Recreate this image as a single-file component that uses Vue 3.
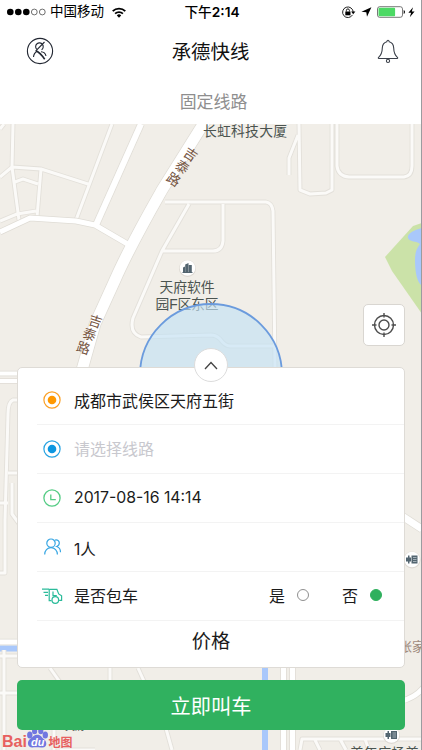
<template>
  <div class="page">
    <header class="status">
      <div class="status-left">
        <svg width="39" height="10" viewBox="0 0 39 10">
          <circle v-for="n in 5" :key="n" :cx="n * 8 - 4.7" cy="5" :r="n < 4 ? 3.3 : 2.9" :fill="n < 4 ? '#000' : 'none'" :stroke="n < 4 ? 'none' : '#333'" stroke-width=".7" />
        </svg>
        <span class="carrier">中国移动</span>
        <svg class="wifi" width="14" height="11" viewBox="0 0 14 11" fill="none" stroke="#000" stroke-width="1.8">
          <path d="M.7 4.1a9 9 0 0 1 12.6 0M3.1 6.7a5.6 5.6 0 0 1 7.8 0" />
          <path d="M4.8 8.4a3.2 3.2 0 0 1 4.4 0L7 10.7z" fill="#000" stroke="none" />
        </svg>
      </div>
      <div class="status-time">下午<b>2:14</b></div>
      <div class="status-right">
        <svg width="80" height="14" viewBox="0 0 80 14">
          <path d="M12.5 9.9a5.3 5.3 0 1 1 .7-2.5" fill="none" stroke="#222" stroke-width="1" />
          <path d="M11.1 6.6h4.3l-2.2 2.7z" />
          <path d="M5.3 6.5h5.2v3.8H5.3z" />
          <path d="M6.4 6.5V5.4a1.5 1.5 0 0 1 3 0v1.1" fill="none" stroke="#000" stroke-width=".9" />
          <path d="M31.4 2.3l-4.4 9.4-.7-4.5-4.9-.5z" />
          <rect x="37.5" y="1.7" width="25" height="10.6" rx="2.2" fill="#fff" stroke="#555" stroke-width=".8" />
          <rect x="38.5" y="2.7" width="16.6" height="8.6" rx="1" fill="#4cd964" />
          <path d="M63.7 5a2.2 2.2 0 0 1 0 4z" />
          <path d="M73 2.2l-4.6 5.6h2.7l-1.3 4.4 4.8-5.8h-2.8z" />
        </svg>
      </div>
    </header>

    <nav class="nav">
      <svg width="28" height="28" viewBox="0 0 28 28" fill="none" stroke="#222732" stroke-width="1.1">
        <circle cx="14" cy="14" r="12.6" />
        <path d="M18.5 5L9.6 14.2M10.6 12.2a3.8 3.8 0 1 1 5 .6M7.5 20c.2-3 1.3-4.5 3.6-5.8M15 14.7c2.7.2 4.5 1.9 5 4.3" />
        <path d="M10 13.8c3 1.3 5.8 4.3 8.7 8.5" stroke-width="1.6" />
      </svg>
      <h1 class="title">承德快线</h1>
      <svg width="22" height="25" viewBox="0 0 22 25" fill="none" stroke="#3b404a" stroke-width="1.1">
        <path d="M11 1.2c-.7 0-1 .6-1.2 1.5C6.7 3.5 5.4 6 5.3 9c-.1 4-1.3 7.3-3.7 9.3-.4.4-.5 1.2.2 1.2h18.4c.7 0 .6-.8.2-1.2-2.4-2-3.6-5.3-3.7-9.3-.1-3-1.4-5.5-4.5-6.3-.2-.9-.5-1.5-1.2-1.5z" />
        <circle cx="11" cy="21.9" r="1.6" />
      </svg>
    </nav>

    <div class="tab">固定线路</div>

    <main class="content">
      <svg class="map" width="421" height="626" viewBox="0 124 421 626">
        <rect y="124" width="422" height="626" fill="#f1eee8" />
        <path d="M422 223l-9 3-28 31 7 14 30 43z" fill="#cbe2a8" />
        <path d="M422 228c-7 2-15 5-14 10 1 4 9 3 12 6-4 5-5 10-5 16 0 15 3 23 7 26z" fill="#a9c8fb" />
        <path d="M0 648.5h20M265 660v90" fill="none" stroke="#a9c8fb" stroke-width="6" />

        <g fill="none" stroke-linejoin="round">
          <path v-for="(d, i) in lanes" :key="'c' + i" :d="d" stroke="#e3e0da" stroke-width="4.8" />
          <path v-for="(d, i) in lanes" :key="'l' + i" :d="d" stroke="#fbfaf8" stroke-width="3" />
          <path v-for="(r, i) in roads" :key="'d' + i" :d="r.d" stroke="#dfdcd5" :stroke-width="r.w + 1.5" />
          <path v-for="(r, i) in roads" :key="'r' + i" :d="r.d" stroke="#fff" :stroke-width="r.w" />
        </g>

        <g class="road-name">
          <text v-for="c in roadName" :key="c.x" :transform="`translate(${c.x} ${c.y}) rotate(${c.r})`" text-anchor="middle" dy="4.8">{{ c.t }}</text>
        </g>

        <g class="place">
          <text x="203" y="135.5" textLength="84">长虹科技大厦</text>
          <text x="159.5" y="291.5" textLength="55">天府软件</text>
          <text x="155.5" y="308.5" textLength="63">园F区东区</text>
          <text x="350" y="757.5" textLength="69">美年广场美</text>
          <text x="65" y="730" font-size="10">天府</text>
          <text x="399" y="650.5" class="brown">张家</text>
        </g>

        <circle cx="187.5" cy="268.5" r="8.5" fill="#ddd9d3" />
        <circle cx="187.5" cy="268" r="7.8" fill="#fff" />
        <path d="M183 272.5v-5l2-1v6zM185.2 272.5v-8l3.3-1.5v9.5zM188.8 272.5v-7.5h3v7.5zM182.5 272h10v1h-10z" fill="#536570" />
        <g v-for="p in hotels" :key="p.y" :transform="`translate(${p.x} ${p.y})`">
          <circle cy=".5" r="8.5" fill="#ddd9d3" />
          <circle r="7.8" fill="#fff" />
          <path d="M-4-4h1.5v8H-4zM-6-2h5v4h-5zM-.5-4h6v8h-6z" fill="#536570" />
          <path d="M1-2h3.5M1 0h3.5M1 2h3.5" stroke="#b6c2c8" stroke-width=".8" />
        </g>

        <circle cx="211" cy="375" r="71" fill="#c3e2f5" fill-opacity=".65" stroke="#6b9bdd" stroke-width="1.8" />

        <g class="baidu">
          <text x="2" y="747" textLength="25" lengthAdjust="spacingAndGlyphs" class="bai">Bai</text>
          <text x="48.5" y="746.5" textLength="24" class="ditu">地图</text>
          <g fill="#7177e0">
            <ellipse cx="29.8" cy="735" rx="2.7" ry="3.5" />
            <ellipse cx="34.6" cy="731" rx="2.6" ry="3.3" />
            <ellipse cx="40.8" cy="731" rx="2.6" ry="3.3" />
            <ellipse cx="45.3" cy="735" rx="2.7" ry="3.5" />
            <path d="M37.5 734.7c3.5 0 4 2.5 6.500 4.500 3.300 2.700 3.300 7.800-1.500 8.300-3.200.2-6.500-.5-10 0-5 .3-6-5.500-2.500-8.500 3-2.300 4-4.300 7.500-4.300z" />
          </g>
          <text x="31" y="746" class="du">du</text>
        </g>
      </svg>

      <button class="locate">
        <svg width="26" height="26" viewBox="0 0 26 26" fill="none" stroke="#4d4d4d" stroke-width="1.4">
          <circle cx="13" cy="13" r="9.5" />
          <circle cx="13" cy="13" r="5" />
          <path d="M13 1v4.5M13 20.5V25M1 13h4.5M20.5 13H25" />
        </svg>
      </button>

      <section class="card">
        <button class="fold">
          <svg width="14" height="9" viewBox="0 0 14 9" fill="none" stroke="#444" stroke-width="1.3"><path d="M1 8l6-6.5L13 8" /></svg>
        </button>
        <div class="row first">
          <svg class="icon" viewBox="0 0 22 20"><circle cx="11" cy="10" r="8.1" fill="none" stroke="#fba026" stroke-width="1.2" /><circle cx="11" cy="10" r="4.3" fill="#ff9800" /></svg>
          <span>成都市武侯区天府五街</span>
        </div>
        <div class="row">
          <svg class="icon" viewBox="0 0 22 20"><circle cx="11" cy="10" r="8.1" fill="none" stroke="#27a3e2" stroke-width="1.2" /><circle cx="11" cy="10" r="4.3" fill="#0c96e0" /></svg>
          <span class="hint">请选择线路</span>
        </div>
        <div class="row">
          <svg class="icon" viewBox="0 0 22 20" fill="none" stroke="#55cc85" stroke-width="1.3"><circle cx="11" cy="10" r="8.1" /><path d="M9.8 6.5v5.1h5" /></svg>
          <span class="date">2017-08-16 14:14</span>
        </div>
        <div class="row people">
          <svg class="icon" viewBox="0 0 22 20" fill="none" stroke="#37a6e3" stroke-width="1.2">
            <circle cx="10" cy="6.2" r="4.2" />
            <path d="M3.7 17.5c0-4 2.6-6.8 6.3-6.8s6.4 2.8 6.4 6.8M14 3.1c2.5-.8 4.3.8 4.3 3 0 1.7-1 2.8-2.6 3.4 2.3.7 3.8 2.9 3.8 5.8" />
          </svg>
          <span>1人</span>
        </div>
        <div class="row">
          <svg class="icon" viewBox="0 0 22 20" fill="none" stroke="#2bbb9a" stroke-width="1.2">
            <path d="M1 3.2h7M2.5 6.3H7M4 9.3h3M8.2 3.3h7.7l1.8 4.6 2.9 1.9v4.5h-2.5M10.5 14.7H8.2V3.3M12 5.5v4.2h3.8" />
            <circle cx="14.3" cy="14" r="3.3" />
          </svg>
          <span>是否包车</span>
          <div class="options">
            <label v-for="o in options" :key="o.text" class="option" @click="charter = o.value">
              {{ o.text }}<i class="radio" :class="{ on: charter === o.value }"></i>
            </label>
          </div>
        </div>
        <div class="price">价格</div>
      </section>

      <button class="submit">立即叫车</button>
    </main>
  </div>
</template>

<script setup>
import { ref } from 'vue'

const charter = ref(false)
const options = [
  { text: '是', value: true },
  { text: '否', value: false }
]

const lanes = [
  'M13 124L12 167L19 220M0 177L12 167L41 169L88 184M112 124L76 220M41 169L37 217M15 182L23 179L38 184M0 221L17 214L36 211M0 129L4 124',
  'M299 124L300 190L310 194L326 193L332 190V124M298 135L289 158V175M337 124V166Q338 176 349 177H404Q412 176 412 166V124',
  'M165 202H266Q272 203 273 211L275 368M189 204L162 251L133 318Q129 333 141 337L211 335Q216 335 220 339Q225 346 230 346H275M223 204V241Q222 251 213 251H162',
  'M20 400H13Q8 402 8 414L5 520V573H0M8 473H20M0 503H8M12 483V514L20 525M0 656H20M4 650V750M0 693H20M110 660V682M50 668L62 685M138 668L148 690L165 725L172 750',
  'M54 727V750M60 750H95M300 750L302 739H422M315 740L320 750M340 739L346 750M365 739L369 750'
]
const roads = [
  { d: 'M0 232L30 218L76 221L95 225L131 246', w: 5 },
  { d: 'M141 124L96 225', w: 6 },
  { d: 'M207 118L162 190C145 220 129 248 115 280L95 324L82 370', w: 11 },
  { d: 'M0 373.5H20M0 381H20', w: 4 },
  { d: 'M0 642H20', w: 5 },
  { d: 'M283.5 660V750M292.5 660V750', w: 5 },
  { d: 'M402 516L422 529', w: 7 },
  { d: 'M402 701Q416 697 424 687', w: 5 }
]
const roadName = [
  { t: '吉', x: 190.5, y: 154.5, r: 34 },
  { t: '泰', x: 182, y: 167, r: 34 },
  { t: '路', x: 173.5, y: 179.5, r: 34 },
  { t: '吉', x: 95.5, y: 321.5, r: 18 },
  { t: '泰', x: 89.5, y: 334.5, r: 18 },
  { t: '路', x: 83.5, y: 348, r: 18 }
]
const hotels = [
  { x: 412, y: 559.5 },
  { x: 391.5, y: 735 }
]
</script>

<style>
body {
  margin: 0;
}
</style>

<style scoped>
.page {
  display: flex;
  flex-direction: column;
  width: 422px;
  height: 750px;
  box-sizing: border-box;
  overflow: hidden;
  border-right: 1px solid #9b9b9f;
  background: #fff;
  color: #1b1b1b;
  font-family: "Liberation Sans", "Noto Sans CJK SC", sans-serif;
}

button {
  border: none;
  padding: 0;
  font-family: inherit;
  cursor: pointer;
}

svg {
  display: block;
}

.status {
  display: grid;
  grid-template-columns: 1fr auto 1fr;
  align-items: center;
  height: 24px;
  padding: 0 1px 0 7px;
  color: #000;
}

.status-left {
  display: flex;
  align-items: center;
}

.carrier {
  margin-left: 4px;
  font-size: 13.5px;
  line-height: 20px;
}

.wifi {
  margin-left: 8px;
}

.status-time {
  padding-right: 3px;
  font-family: Inter, "Noto Sans CJK SC", sans-serif;
  font-size: 13.7px;
  font-weight: 500;
  line-height: 20px;
}

.status-time b {
  font-weight: 600;
}

.status-right {
  display: flex;
  justify-content: flex-end;
}

.nav {
  display: grid;
  grid-template-columns: 1fr auto 1fr;
  align-items: center;
  height: 54px;
  padding: 0 22px 0 26px;
}

.nav > :last-child {
  justify-self: end;
}

.title {
  margin: 0 4px 2px 0;
  font-size: 19.4px;
  font-weight: 400;
  color: #111;
}

.tab {
  height: 46px;
  line-height: 49px;
  padding-left: 6px;
  text-align: center;
  font-size: 16.9px;
  color: #8e8e8e;
}

.content {
  position: relative;
  flex: 1;
  display: flex;
  flex-direction: column;
  padding: 180px 16px 0 17px;
}

.map {
  position: absolute;
  left: 0;
  top: 0;
}

.road-name {
  font-size: 13.5px;
  fill: #75543f;
}

.place {
  font-size: 13.8px;
  fill: #4b5450;
}

.place .brown {
  font-size: 13px;
  fill: #a08a7d;
}

.baidu text {
  font-weight: 700;
}

.bai,
.ditu {
  fill: #e7605f;
}

.bai {
  font-size: 16px;
}

.ditu {
  font-size: 12px;
}

.baidu .du {
  font-size: 11px;
  font-style: italic;
  fill: #fff;
}

.locate {
  position: relative;
  align-self: flex-end;
  display: flex;
  align-items: center;
  justify-content: center;
  width: 42px;
  height: 42px;
  box-sizing: border-box;
  border: 1px solid #d9d6d1;
  border-radius: 5px;
  background: #fff;
}

.card {
  position: relative;
  height: 301px;
  margin: 21px 0 0;
  box-sizing: border-box;
  border: 1px solid #dedbd6;
  border-radius: 5px;
  background: #fff;
}

.fold {
  position: absolute;
  left: 50%;
  top: -20px;
  width: 34px;
  height: 34px;
  margin-left: -17px;
  display: flex;
  align-items: center;
  justify-content: center;
  box-sizing: border-box;
  border: 1px solid #dcdcdc;
  border-radius: 50%;
  background: #fff;
}

.row {
  display: flex;
  align-items: center;
  height: 49px;
  margin-left: 19px;
  box-sizing: border-box;
  border-bottom: 1px solid #f3f3f3;
  font-size: 16px;
}

.row.first {
  height: 57px;
  padding-top: 8px;
}

.row > span {
  margin-bottom: 2px;
}

.row.first > span {
  margin-bottom: 0;
}

.icon {
  width: 22px;
  height: 20px;
  margin: 0 11px 0 4px;
}

.hint {
  color: #c8c8ce;
}

.date {
  font-family: Inter, sans-serif;
  font-size: 15.8px;
}

.people span {
  padding-top: 3px;
  font-family: Inter, "Noto Sans CJK SC", sans-serif;
  font-size: 15.5px;
}

.options {
  display: flex;
  gap: 33px;
  margin: 0 0 2px auto;
  padding-right: 22px;
}

.option {
  display: flex;
  align-items: center;
  gap: 12px;
}

.radio {
  width: 12px;
  height: 12px;
  box-sizing: border-box;
  border: 1px solid #8f8f8f;
  border-radius: 50%;
}

.radio.on {
  border-color: #2fb05d;
  background: #2fb05d;
}

.price {
  line-height: 42px;
  text-align: center;
  font-size: 19.3px;
}

.submit {
  position: relative;
  height: 50px;
  margin-top: 12px;
  border-radius: 5px;
  background: #30b15f;
  color: #fff;
  font-size: 20.2px;
}
</style>
